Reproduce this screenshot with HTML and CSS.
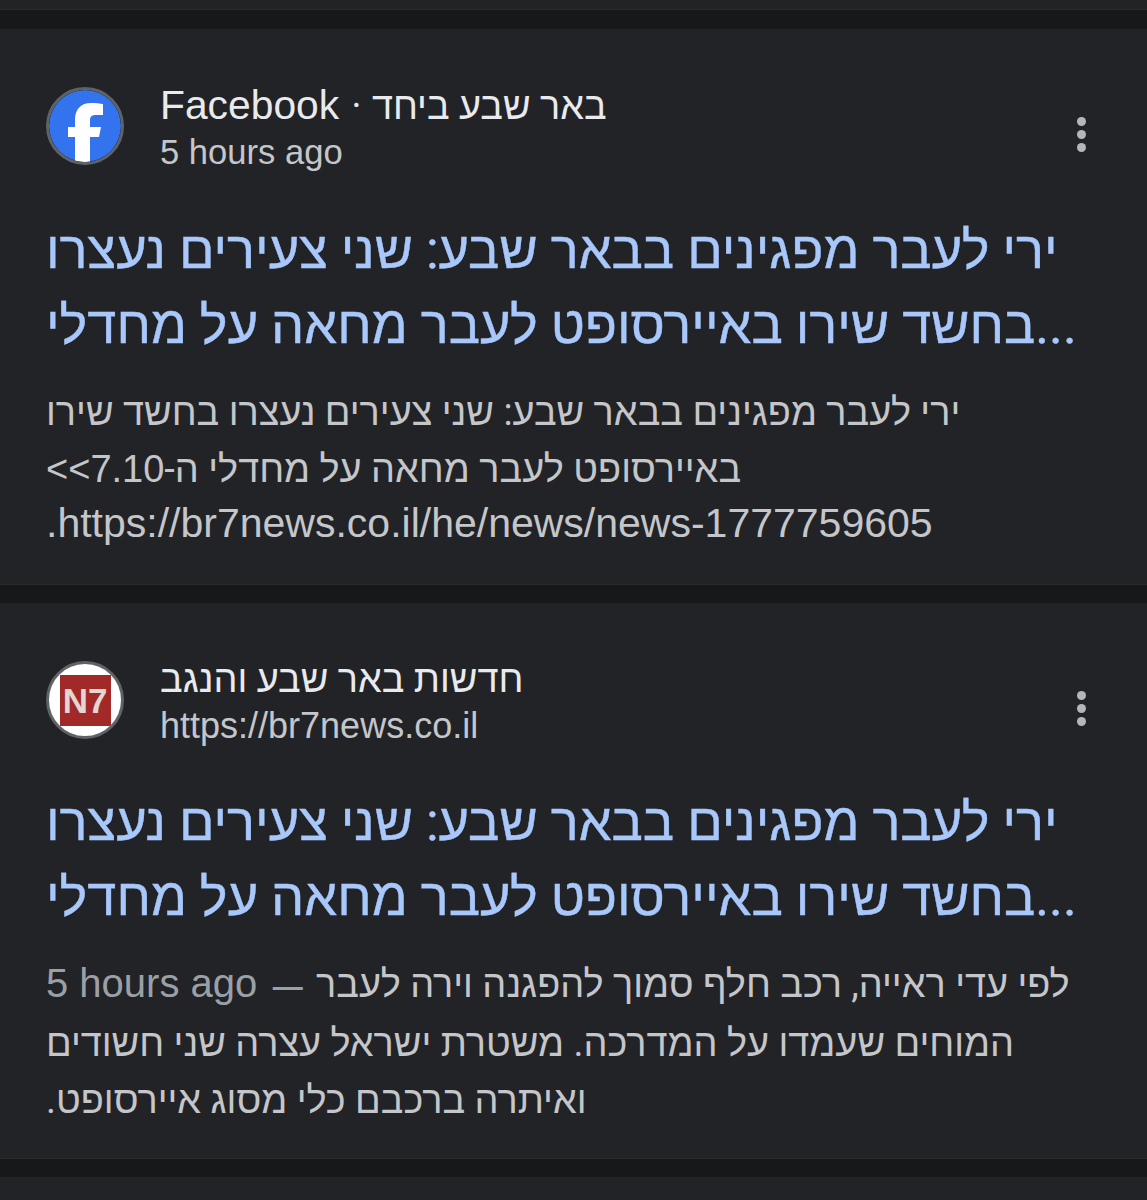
FILE: index.html
```html
<!DOCTYPE html>
<html lang="he">
<head>
    <meta charset="UTF-8">
    <meta name="viewport" content="width=device-width, initial-scale=1.0">
    <title>Search results</title>
    <link rel="stylesheet" href="styles.css">
</head>
<body>
    <div class="strip"></div>

    <div class="result">
        <div class="head">
            <div class="avatar avatar-fb">
                <svg viewBox="0 0 72 72" width="72" height="72">
                    <circle cx="36" cy="36" r="36" fill="#3374ee"/>
                    <path d="M26 72V47H19V37H26V30C26 19 32 13 42 13C47 13 51 13.500 54 14V25H47C42 25 41 27 41 31V37H52L50 47H41V72Z" fill="#fff"/>
                </svg>
            </div>
            <div class="source">
                <div class="name" dir="ltr"><span class="brand">Facebook</span> <span class="sep">·</span> באר שבע ביחד</div>
                <div class="meta">5 hours ago</div>
            </div>
            <div class="dots"><i></i><i></i><i></i></div>
        </div>
        <div class="title" dir="ltr">
            <span>ירי לעבר מפגינים בבאר שבע: שני צעירים נעצרו</span>
            <span>בחשד שירו באיירסופט לעבר מחאה על מחדלי...</span>
        </div>
        <div class="snippet">
            <span dir="rtl">ירי לעבר מפגינים בבאר שבע: שני צעירים נעצרו בחשד שירו</span>
            <span dir="rtl">באיירסופט לעבר מחאה על מחדלי ה-<b class="num">7.10&gt;&gt;</b></span>
            <span class="url-line" dir="rtl"><b class="url">https://br7news.co.il/he/news/news-1777759605.</b></span>
        </div>
    </div>

    <div class="result result-second">
        <div class="head">
            <div class="avatar avatar-n7">
                <div class="n7">N7</div>
            </div>
            <div class="source">
                <div class="name">חדשות באר שבע והנגב</div>
                <div class="meta meta-url">https://br7news.co.il</div>
            </div>
            <div class="dots"><i></i><i></i><i></i></div>
        </div>
        <div class="title" dir="ltr">
            <span>ירי לעבר מפגינים בבאר שבע: שני צעירים נעצרו</span>
            <span>בחשד שירו באיירסופט לעבר מחאה על מחדלי...</span>
        </div>
        <div class="snippet">
            <span dir="ltr"><b class="age">5 hours ago</b> <b class="dash">—</b> לפי עדי ראייה, רכב חלף סמוך להפגנה וירה לעבר</span>
            <span dir="rtl">המוחים שעמדו על המדרכה. משטרת ישראל עצרה שני חשודים</span>
            <span dir="rtl">ואיתרה ברכבם כלי מסוג איירסופט.</span>
        </div>
    </div>

    <div class="strip"></div>
</body>
</html>
```

FILE: styles.css
```css
html, body {
    margin: 0;
    height: 1200px;
    overflow: hidden;
}
body {
    background: #17181a;
    font-family: Roboto, "Liberation Sans", sans-serif;
    color: #c4c6ca;
}
.strip {
    height: 9px;
    background: #222327;
    border-bottom: 1px solid #2a2b2d;
    margin-bottom: 19px;
}
.strip:last-child {
    height: 24px;
    border-bottom: 0;
}
.result {
    height: 556px;
    box-sizing: border-box;
    padding: 58px 46px 0;
    margin-bottom: 18px;
    background: #222327;
    box-shadow: inset 0 -1px 0 #2a2b2d;
}
.head {
    display: flex;
    align-items: flex-start;
    height: 78px;
}
.avatar {
    width: 78px;
    height: 78px;
    box-sizing: border-box;
    border: 3px solid #5f6368;
    border-radius: 50%;
    overflow: hidden;
    flex: none;
    display: flex;
    align-items: center;
    justify-content: center;
}
.avatar-fb svg {
    display: block;
}
.avatar-n7 {
    background: #fff;
}
.n7 {
    width: 51px;
    height: 51px;
    background: #a12a28;
    color: #e4d6d2;
    font: bold 35px/51px "Liberation Sans", sans-serif;
    text-align: center;
}
.source {
    margin-left: 36px;
    flex: 1;
    margin-top: -4px;
}
.name {
    font-size: 37.900px;
    line-height: 44px;
    color: #e8eaed;
}
.brand {
    font-family: "Liberation Sans", sans-serif;
    font-size: 40.800px;
}
.sep {
    margin: 0 1px 0 3px;
}
.meta {
    font-family: "Liberation Sans", sans-serif;
    font-size: 34.600px;
    line-height: 44px;
    margin-top: 2px;
}
.meta-url {
    font-size: 36px;
    margin-top: 3px;
}
.dots {
    display: flex;
    flex-direction: column;
    gap: 4px;
    margin: 30px 15px 0 0;
}
.dots i {
    width: 9px;
    height: 9px;
    border-radius: 50%;
    background: #b4b6ba;
}
.title {
    margin-top: 48px;
    font-size: 52.400px;
    line-height: 75px;
    color: #a8c7fa;
    -webkit-text-stroke: 0.4px #a8c7fa;
}
.title span, .snippet span {
    display: block;
    white-space: nowrap;
    text-align: left;
}
.snippet {
    margin-top: 21px;
    font-size: 37.900px;
    line-height: 57px;
}
.snippet .url-line {
    margin-top: -3px;
}
.result-second .title {
    margin-top: 46px;
}
.result-second .snippet {
    margin-top: 20px;
}
.url, .num, .age {
    font-family: "Liberation Sans", sans-serif;
    font-weight: normal;
}
.url {
    font-size: 41px;
}
.num {
    font-size: 38px;
}
.age {
    font-size: 40px;
    color: #9aa0a6;
}
.dash {
    font-family: "Liberation Sans", sans-serif;
    font-size: 30px;
    font-weight: bold;
    margin: 0 4px 0 6px;
    color: #9aa0a6;
}
```
